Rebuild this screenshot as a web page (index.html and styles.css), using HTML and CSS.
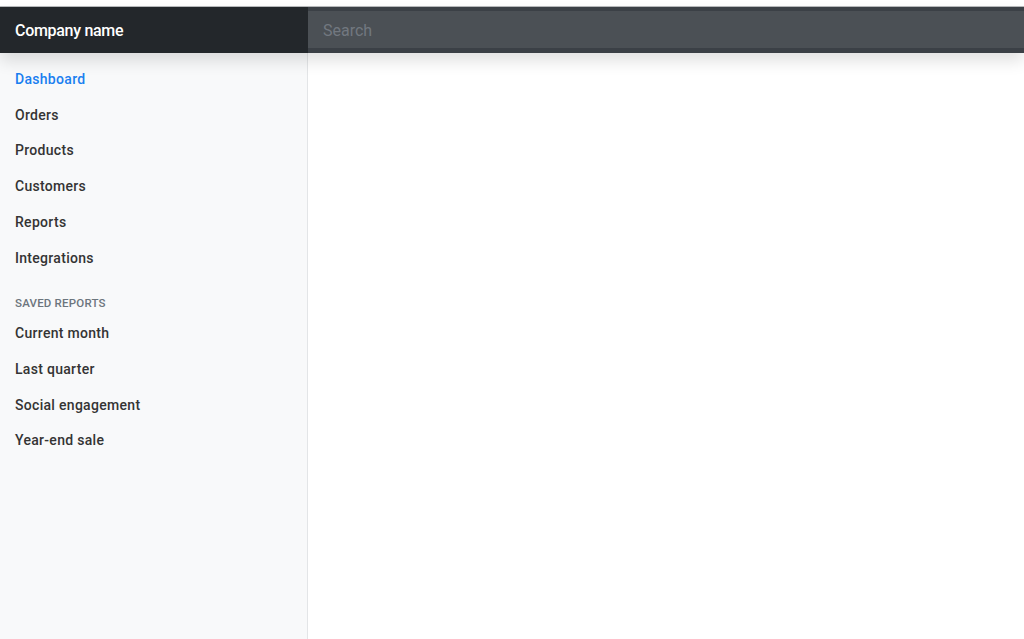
FILE: index.html
```html
<!DOCTYPE html>
<html lang="en">
<head>
    <meta charset="UTF-8">
    <meta name="viewport" content="width=device-width, initial-scale=1.0">
    <title>Dashboard</title>
    <link rel="stylesheet" href="styles.css">
</head>
<body>
    <div class="top-strip"></div>
    <nav class="navbar">
        <a class="brand" href="#">Company name</a>
        <input class="search" type="text" placeholder="Search" aria-label="Search">
    </nav>
    <div class="page">
        <aside class="sidebar">
            <ul class="nav">
                <li><a class="nav-link active" href="#">Dashboard</a></li>
                <li><a class="nav-link" href="#">Orders</a></li>
                <li><a class="nav-link" href="#">Products</a></li>
                <li><a class="nav-link" href="#">Customers</a></li>
                <li><a class="nav-link" href="#">Reports</a></li>
                <li><a class="nav-link" href="#">Integrations</a></li>
            </ul>
            <h6 class="sidebar-heading">Saved reports</h6>
            <ul class="nav">
                <li><a class="nav-link" href="#">Current month</a></li>
                <li><a class="nav-link" href="#">Last quarter</a></li>
                <li><a class="nav-link" href="#">Social engagement</a></li>
                <li><a class="nav-link" href="#">Year-end sale</a></li>
            </ul>
        </aside>
        <main class="content"></main>
    </div>
</body>
</html>
```
FILE: styles.css
```css
/* Base */
html, body {
    height: 100%;
}

body {
    margin: 0;
    font-family: Roboto, "Liberation Sans", Arial, sans-serif;
    background: #ffffff;
    display: flex;
    flex-direction: column;
    overflow: hidden;
}

.top-strip {
    height: 6px;
    background: #ffffff;
    border-bottom: 1px solid #b9bbbd;
    flex: none;
}

/* Top navbar */
.navbar {
    position: relative;
    z-index: 2;
    display: flex;
    height: 46px;
    flex: none;
    background: #343a40;
    box-shadow: 0 8px 16px rgba(0, 0, 0, 0.12);
}

.brand {
    width: 308px;
    box-sizing: border-box;
    padding-left: 15px;
    display: flex;
    align-items: center;
    background: #23272b;
    color: #ffffff;
    font-size: 16px;
    font-weight: 500;
    text-decoration: none;
    letter-spacing: -0.3px;
}

.search {
    flex: 1;
    margin: 0;
    box-sizing: border-box;
    height: 46px;
    padding: 1px 15px 0;
    border: none;
    border-top: 4px solid #3b4046;
    border-bottom: 5px solid #3b4046;
    background: #4b5055;
    color: #ffffff;
    font-family: inherit;
    font-size: 16px;
    outline: none;
}

.search::placeholder {
    color: #727880;
}

/* Body area */
.page {
    flex: 1;
    display: flex;
    min-height: 0;
}

.sidebar {
    width: 307px;
    flex: none;
    background: #f8f9fa;
    border-right: 1px solid #e3e5e7;
    padding-top: 9px;
}

.nav {
    list-style: none;
    margin: 0;
    padding: 0;
}

.nav-link {
    display: block;
    padding: 8px 15px;
    font-size: 14px;
    line-height: 19.7px;
    font-weight: 500;
    letter-spacing: 0.3px;
    color: #343434;
    text-decoration: none;
}

.nav-link.active {
    color: #1a7ff0;
}

.sidebar-heading {
    margin: 19px 0 4px;
    padding: 0 15px;
    font-size: 11.5px;
    line-height: 17px;
    font-weight: 500;
    letter-spacing: 0.2px;
    text-transform: uppercase;
    color: #6c757d;
}

.content {
    flex: 1;
}
```
